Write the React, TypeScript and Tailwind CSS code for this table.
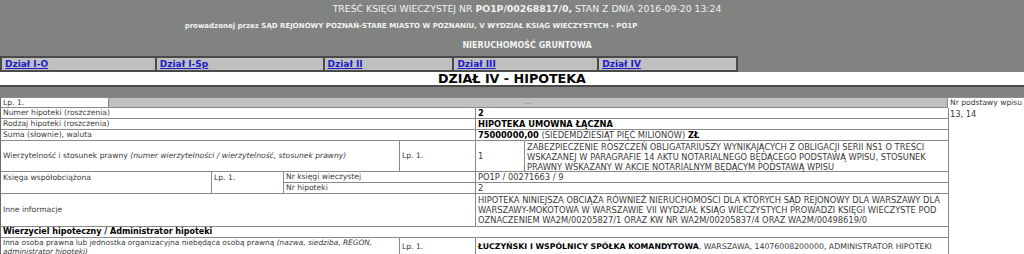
import React from 'react';

const font = { fontFamily: '"DejaVu Sans", Verdana, sans-serif' };

const tabs = [
  { label: 'Dział I-O', w: 'w-[155px]' },
  { label: 'Dział I-Sp', w: 'w-[168px]' },
  { label: 'Dział II', w: 'w-[130px]' },
  { label: 'Dział III', w: 'w-[145px]' },
  { label: 'Dział IV', w: 'w-[139px]' },
];

// shared cell borders; labels are lowercase and set a bit smaller than the uppercase values
const cell = 'border-r border-b border-[#8a8a8a] px-[2px] leading-[10px]';
const val = `${cell} text-[8.3px]`;

export default function App() {
  return (
    <div className="w-[1024px] h-[254px] overflow-hidden bg-[#808380] text-[7.6px] text-[#3a3a3a]" style={font}>
      {/* Header */}
      <div className="pt-[3px]">
        <div className="w-[1054px] text-center text-[9.3px] leading-[12px] text-[#f2f2f2]">
          TREŚĆ KSIĘGI WIECZYSTEJ NR <b>PO1P/00268817/0,</b> STAN Z DNIA 2016-09-20 13:24
        </div>
        <div className="mt-[7px] w-[822px] text-center text-[7px] leading-[9px] font-bold text-[#f2f2f2]">
          prowadzonej przez SĄD REJONOWY POZNAŃ-STARE MIASTO W POZNANIU, V WYDZIAŁ KSIĄG WIECZYSTYCH - PO1P
        </div>
        <div className="mt-[10px] w-[1054px] text-center text-[8px] leading-[10px] font-bold text-[#f2f2f2]">
          NIERUCHOMOŚĆ GRUNTOWA
        </div>
      </div>

      {/* Tabs */}
      <div className="mt-[5px] flex w-[738px] border-t-2 border-l-2 border-[#4a4a4a] bg-[#c0c0c0]">
        {tabs.map((t) => (
          <div key={t.label} className={`${t.w} h-[14px] border-r-2 border-b-2 border-[#4a4a4a] pl-[3px]`}>
            <a href="#" className="text-[9px] leading-[12px] font-bold text-[#1a1acc] underline">
              {t.label}
            </a>
          </div>
        ))}
      </div>
      <div className="h-[15px] bg-white border-b-2 border-[#4a4a4a] text-center text-[12.7px] leading-[14px] font-bold text-black">
        DZIAŁ IV - HIPOTEKA
      </div>

      {/* Content */}
      <div className="mt-[10px] flex bg-white">
        <div className="w-[948px] border-l border-[#6a6a6a]">
          <div className="flex h-[11px] border-t border-b border-[#8a8a8a]">
            <div className="w-[108px] px-[2px] leading-[10px] border-r border-[#8a8a8a]">Lp. 1.</div>
            <div className="flex-1 bg-[#c0c0c0] text-center text-[6px] leading-[10px] text-[#777] border-r border-[#8a8a8a]">
              ---
            </div>
          </div>
          <div className="grid grid-cols-[211px_72px_116px_76px_49px_424px]">
            <div className={`${cell} col-span-4 h-[11px]`}>Numer hipoteki (roszczenia)</div>
            <div className={`${val} col-span-2 font-bold text-black`}>2</div>

            <div className={`${cell} col-span-4 h-[11px]`}>Rodzaj hipoteki (roszczenia)</div>
            <div className={`${val} col-span-2 font-bold text-black`}>HIPOTEKA UMOWNA ŁĄCZNA</div>

            <div className={`${cell} col-span-4 h-[11px]`}>Suma (słownie), waluta</div>
            <div className={`${val} col-span-2`}>
              <b className="text-black">75000000,00</b> (SIEDEMDZIESIĄT PIĘĆ MILIONÓW) <b className="text-black">ZŁ</b>
            </div>

            <div className={`${cell} col-span-3 flex items-center`}>
              <span>
                Wierzytelność i stosunek prawny <i>(numer wierzytelności / wierzytelność, stosunek prawny)</i>
              </span>
            </div>
            <div className={`${cell} flex items-center`}>Lp. 1.</div>
            <div className={`${val} flex items-center`}>1</div>
            <div className={`${val} h-[31px] pt-[1px]`}>
              ZABEZPIECZENIE ROSZCZEŃ OBLIGATARIUSZY WYNIKAJĄCYCH Z OBLIGACJI SERII NS1 O TREŚCI WSKAZANEJ W
              PARAGRAFIE 14 AKTU NOTARIALNEGO BĘDĄCEGO PODSTAWĄ WPISU, STOSUNEK PRAWNY WSKAZANY W AKCIE NOTARIALNYM
              BĘDĄCYM PODSTAWĄ WPISU
            </div>

            <div className={`${cell} row-span-2 pt-[1px]`}>Księga współobciążona</div>
            <div className={`${cell} row-span-2 pt-[1px]`}>Lp. 1.</div>
            <div className={`${cell} col-span-2 h-[11px]`}>Nr księgi wieczystej</div>
            <div className={`${val} col-span-2`}>PO1P / 00271663 / 9</div>
            <div className={`${cell} col-span-2 h-[11px]`}>Nr hipoteki</div>
            <div className={`${val} col-span-2`}>2</div>

            <div className={`${cell} col-span-4 flex items-center`}>Inne informacje</div>
            <div className={`${val} col-span-2 h-[33px] pt-[1px]`}>
              HIPOTEKA NINIEJSZA OBCIĄŻA RÓWNIEŻ NIERUCHOMOŚCI DLA KTÓRYCH SĄD REJONOWY DLA WARSZAWY DLA
              WARSZAWY-MOKOTOWA W WARSZAWIE VII WYDZIAŁ KSIĄG WIECZYSTYCH PROWADZI KSIĘGI WIECZYSTE POD OZNACZENIEM
              WA2M/00205827/1 ORAZ KW NR WA2M/00205837/4 ORAZ WA2M/00498619/0
            </div>

            <div className={`${cell} col-span-6 h-[11px] text-[8px] font-bold text-black`}>
              Wierzyciel hipoteczny / Administrator hipoteki
            </div>

            <div className={`${cell} col-span-3 h-[19px] !leading-[9px] text-[7.4px]`}>
              Inna osoba prawna lub jednostka organizacyjna niebędąca osobą prawną{' '}
              <i>(nazwa, siedziba, REGON, administrator hipoteki)</i>
            </div>
            <div className={`${cell} flex items-center`}>Lp. 1.</div>
            <div className={`${cell} col-span-2 flex items-center whitespace-nowrap text-[7.8px]`}>
              <b className="text-black">ŁUCZYŃSKI I WSPÓLNICY SPÓŁKA KOMANDYTOWA</b>, WARSZAWA, 14076008200000,
              ADMINISTRATOR HIPOTEKI
            </div>
          </div>
        </div>

        {/* Nr podstawy wpisu */}
        <div className="flex-1 flex flex-col">
          <div className="h-[11px] px-[2px] leading-[10px] border-t border-[#8a8a8a] whitespace-nowrap">Nr podstawy wpisu</div>
          <div className="flex-1 px-[2px] leading-[10px] pt-[1px] text-[8.3px]">13, 14</div>
        </div>
      </div>
    </div>
  );
}
